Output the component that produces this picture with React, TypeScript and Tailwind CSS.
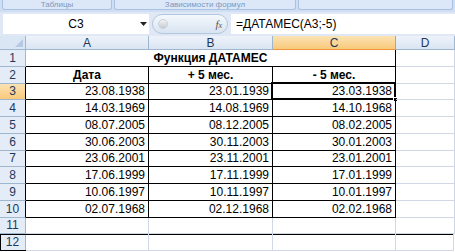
import React from "react";

const rows: [string, string, string][] = [
  ["23.08.1938", "23.01.1939", "23.03.1938"],
  ["14.03.1969", "14.08.1969", "14.10.1968"],
  ["08.07.2005", "08.12.2005", "08.02.2005"],
  ["30.06.2003", "30.11.2003", "30.01.2003"],
  ["23.06.2001", "23.11.2001", "23.01.2001"],
  ["17.06.1999", "17.11.1999", "17.01.1999"],
  ["10.06.1997", "10.11.1997", "10.01.1997"],
  ["02.07.1968", "02.12.1968", "02.02.1968"],
];

const grid = "grid grid-cols-[26px_123px_124px_123px_1fr]";

function RowHead({ n, black, active }: { n: number; black?: boolean; active?: boolean }) {
  return (
    <div
      className={`flex items-center justify-center border-b border-b-[#9eb6ce] border-r text-[12px] leading-none ${
        black ? "border-r-black" : "border-r-[#9eb6ce]"
      } ${active ? "bg-gradient-to-b from-[#fbe3b4] to-[#f8c97a] text-[#1e395b]" : "bg-[#e4ecf7] text-[#1e395b]"}`}
    >
      {n}
    </div>
  );
}

function Cell({
  children,
  table,
  bold,
  center,
  selected,
}: {
  children?: React.ReactNode;
  table?: boolean;
  bold?: boolean;
  center?: boolean;
  selected?: boolean;
}) {
  return (
    <div
      className={`relative flex items-center border-b border-r px-[3px] text-[12px] leading-none text-black ${
        table ? "border-black" : "border-[#d0d7e5]"
      } ${bold ? "font-bold" : ""} ${center ? "justify-center" : "justify-end"}`}
    >
      {children}
      {selected && (
        <>
          <div className="pointer-events-none absolute -left-[2px] -top-[2px] -right-[1px] -bottom-[1px] border-2 border-black" />
          <div className="absolute -bottom-[3px] -right-[3px] h-[5px] w-[5px] border border-white bg-black" />
        </>
      )}
    </div>
  );
}

export default function App() {
  return (
    <div className="h-[252px] w-[455px] overflow-hidden bg-white" style={{ fontFamily: '"Liberation Sans", Arial, sans-serif' }}>
      {/* ribbon group labels */}
      <div className="flex h-[12px] gap-[2px] bg-[#cfdef2] px-[2px]">
        <div className="flex h-[10px] w-[110px] items-center justify-center rounded-b-[3px] border border-t-0 border-[#a9c2e2] bg-[#dce8f7]">
          <span className="text-[8px] leading-none text-[#7d97bd]">Таблицы</span>
        </div>
        <div className="flex h-[10px] w-[182px] items-center justify-center rounded-b-[3px] border border-t-0 border-[#a9c2e2] bg-[#dce8f7]">
          <span className="text-[8px] leading-none text-[#7d97bd]">Зависимости формул</span>
        </div>
        <div className="h-[10px] flex-1 rounded-b-[3px] border border-t-0 border-[#a9c2e2] bg-[#dce8f7]" />
      </div>

      {/* formula bar */}
      <div className="flex h-[24px] items-center bg-[#dfe8f4] pl-[3px]">
        <div className="relative flex h-[20px] w-[146px] items-center justify-center bg-white text-[12px] text-black">
          C3
          <svg className="absolute right-[2px] top-[8px]" width="7" height="4" viewBox="0 0 7 4">
            <path d="M0 0h7L3.5 4z" fill="#222" />
          </svg>
        </div>
        <div className="relative ml-[3px] flex h-[20px] w-[76px] items-center justify-end rounded-full border border-[#b3c6df] bg-gradient-to-b from-[#f4f8fc] to-[#d9e4f1] pr-[5px]">
          <div className="absolute left-[5px] top-[4px] h-[10px] w-[10px] rounded-full border border-[#c8d2de] bg-gradient-to-b from-[#f2f2f2] to-[#c6ccd4]" />
          <span className="text-[11px] italic text-[#555]" style={{ fontFamily: '"Liberation Serif", serif' }}>
            f<span className="text-[8px]">x</span>
          </span>
        </div>
        <div className="ml-[3px] flex h-[20px] flex-1 items-center bg-white pl-[5px] text-[12px] text-black">=ДАТАМЕС(A3;-5)</div>
      </div>

      {/* column headers */}
      <div className={`${grid} h-[14px]`}>
        <div className="relative border-b border-r border-[#9eb6ce] bg-[#dbe6f4]">
          <svg className="absolute bottom-[2px] right-[2px]" width="8" height="8" viewBox="0 0 8 8">
            <path d="M8 0V8H0z" fill="#b6c9e2" />
          </svg>
        </div>
        {["A", "B", "C", "D"].map((c) => (
          <div
            key={c}
            className={`flex items-center justify-center border-b border-r text-[12px] leading-none ${
              c === "C"
                ? "border-[#f29536] bg-gradient-to-b from-[#fbe3b4] to-[#f8c97a] text-[#1e395b]"
                : "border-[#9eb6ce] bg-gradient-to-b from-[#eef3fa] to-[#dae5f3] text-[#1e395b]"
            }`}
          >
            {c}
          </div>
        ))}
      </div>

      {/* row 1 */}
      <div className={`${grid} h-[16.75px]`}>
        <RowHead n={1} />
        <div className="col-span-3 flex items-center justify-center border-b border-r border-black text-[12px] font-bold leading-none text-black">
          Функция ДАТАМЕС
        </div>
        <Cell />
      </div>

      {/* row 2 */}
      <div className={`${grid} h-[16.75px]`}>
        <RowHead n={2} black />
        <Cell table bold center>Дата</Cell>
        <Cell table bold center>+ 5 мес.</Cell>
        <Cell table bold center>- 5 мес.</Cell>
        <Cell />
      </div>

      {rows.map((r, i) => (
        <div key={i} className={`${grid} h-[16.75px]`}>
          <RowHead n={i + 3} black active={i === 0} />
          <Cell table>{r[0]}</Cell>
          <Cell table>{r[1]}</Cell>
          <Cell table selected={i === 0}>{r[2]}</Cell>
          <Cell />
        </div>
      ))}

      <div className={`${grid} h-[16.75px]`}>
        <RowHead n={11} />
        <Cell />
        <Cell />
        <Cell />
        <Cell />
      </div>

      <div className={`${grid} h-[16.75px] w-[454px] outline outline-1 -outline-offset-1 outline-black`}>
        <RowHead n={12} />
        <Cell />
        <Cell />
        <Cell />
        <Cell />
      </div>
    </div>
  );
}
